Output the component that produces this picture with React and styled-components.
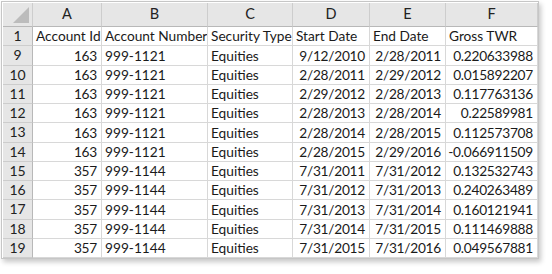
import React from "react";
import styled, { createGlobalStyle } from "styled-components";

const Global = createGlobalStyle`
  html, body { margin: 0; padding: 0; background: #ffffff; }
  body { font-family: Lato, "Open Sans", sans-serif; }
`;

const Page = styled.div`
  padding: 1px 0 0 1px;
  width: 552px;
  height: 274px;
  box-sizing: border-box;
`;

const Frame = styled.div`
  display: inline-block;
  border: 1px solid #c6c6c6;
  padding: 1px 0 0 1px;
  background: #fff;
  box-shadow: 2px 3px 5px rgba(0, 0, 0, 0.22);
`;

const Grid = styled.div`
  display: grid;
  grid-template-columns: 30px 69px 106px 85px 77px 76px 92px;
  grid-template-rows: 24px repeat(12, 19.25px);
  font-family: Lato, "Open Sans", sans-serif;
  font-size: 13.7px;
  color: #1a1a1a;
`;

const Cell = styled.div`
  box-sizing: border-box;
  border-right: 1px solid #d8d8d8;
  border-bottom: 1px solid #d8d8d8;
  display: flex;
  align-items: center;
  justify-content: ${(p) => (p.$right ? "flex-end" : "flex-start")};
  padding: ${(p) => (p.$right ? "0 4px 0 0" : "0 0 0 3px")};
  letter-spacing: ${(p) => (p.$right ? "-0.25px" : "0")};
  white-space: nowrap;
  overflow: hidden;
  line-height: 1;
`;

const ColHead = styled(Cell)`
  background: #e6e6e6;
  justify-content: center;
  padding: 0;
  letter-spacing: 0;
  font-size: 14.5px;
  border-right-color: #cdcdcd;
  border-bottom-color: #b8b8b8;
  color: #222;
`;

const Corner = styled(ColHead)`
  position: relative;
`;

const CornerTri = styled.span`
  position: absolute;
  right: 3px;
  bottom: 3px;
  width: 0;
  height: 0;
  border-left: 16px solid transparent;
  border-bottom: 16px solid #bcbcbc;
`;

const RowHead = styled(Cell)`
  background: #e6e6e6;
  justify-content: center;
  padding: 0;
  letter-spacing: 0;
  font-size: 14px;
  border-right-color: #b8b8b8;
  border-bottom-color: #cdcdcd;
  color: #222;
`;

const cols = ["A", "B", "C", "D", "E", "F"];
const header = ["Account Id", "Account Number", "Security Type", "Start Date", "End Date", "Gross TWR"];
const rows = [
  [9, "163", "999-1121", "Equities", "9/12/2010", "2/28/2011", "0.220633988"],
  [10, "163", "999-1121", "Equities", "2/28/2011", "2/29/2012", "0.015892207"],
  [11, "163", "999-1121", "Equities", "2/29/2012", "2/28/2013", "0.117763136"],
  [12, "163", "999-1121", "Equities", "2/28/2013", "2/28/2014", "0.22589981"],
  [13, "163", "999-1121", "Equities", "2/28/2014", "2/28/2015", "0.112573708"],
  [14, "163", "999-1121", "Equities", "2/28/2015", "2/29/2016", "-0.066911509"],
  [15, "357", "999-1144", "Equities", "7/31/2011", "7/31/2012", "0.132532743"],
  [16, "357", "999-1144", "Equities", "7/31/2012", "7/31/2013", "0.240263489"],
  [17, "357", "999-1144", "Equities", "7/31/2013", "7/31/2014", "0.160121941"],
  [18, "357", "999-1144", "Equities", "7/31/2014", "7/31/2015", "0.111469888"],
  [19, "357", "999-1144", "Equities", "7/31/2015", "7/31/2016", "0.049567881"],
];
const rightCols = [true, false, false, true, true, true];

export default function App() {
  return (
    <Page>
      <Global />
      <Frame>
        <Grid>
          <Corner>
            <CornerTri />
          </Corner>
          {cols.map((c) => (
            <ColHead key={c}>{c}</ColHead>
          ))}
          <RowHead>1</RowHead>
          {header.map((h) => (
            <Cell key={h}>{h}</Cell>
          ))}
          {rows.map(([n, ...vals]) => (
            <React.Fragment key={n}>
              <RowHead>{n}</RowHead>
              {vals.map((v, i) => (
                <Cell key={i} $right={rightCols[i]}>
                  {v}
                </Cell>
              ))}
            </React.Fragment>
          ))}
        </Grid>
      </Frame>
    </Page>
  );
}
